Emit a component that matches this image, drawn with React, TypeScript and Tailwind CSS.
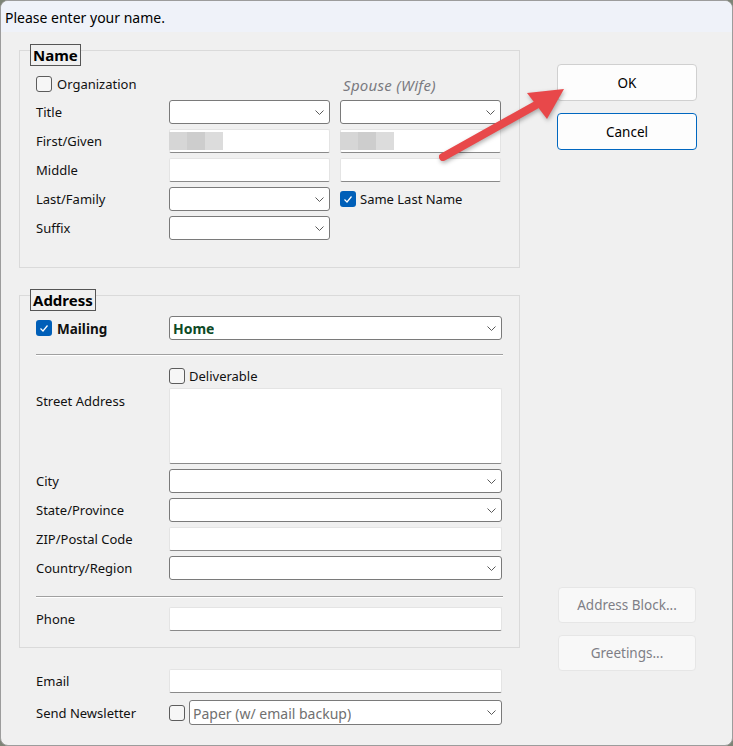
import React from 'react';

const Chevron = () => (
  <svg width="9" height="5" viewBox="0 0 9 5" className="shrink-0">
    <polyline points="0.5,0.5 4.5,4.5 8.5,0.5" fill="none" stroke="#5a5a5a" strokeWidth="1" />
  </svg>
);

const CheckBox = ({ checked }: { checked?: boolean }) =>
  checked ? (
    <span className="flex h-4 w-4 shrink-0 items-center justify-center rounded-[3px] bg-[#005fb8]">
      <svg width="12" height="12" viewBox="0 0 12 12">
        <polyline points="2.5,6.5 5,9 9.5,3.5" fill="none" stroke="#fff" strokeWidth="1.2" />
      </svg>
    </span>
  ) : (
    <span className="h-4 w-4 shrink-0 rounded-[3px] border border-[#5c5c5c] bg-[#f6f6f6]" />
  );

const Select = ({ children, className = '' }: { children?: React.ReactNode; className?: string }) => (
  <div className={`flex h-6 items-center justify-between rounded-[3px] border border-[#7a7a7a] bg-white pl-[3px] pr-[5px] ${className}`}>
    <span className="truncate pt-[1px]">{children}</span>
    <Chevron />
  </div>
);

const TextBox = ({ children, className = '' }: { children?: React.ReactNode; className?: string }) => (
  <div className={`flex h-6 items-center rounded-[2px] border border-[#e4e4e4] border-b-[#8a8a8a] bg-white ${className}`}>{children}</div>
);

// blurred name placeholder
const Blur = () => (
  <div className="ml-[-1px] flex h-[18px]">
    <span className="w-[18px] bg-[#d6d6d6]" />
    <span className="w-[18px] bg-[#cdcdcd]" />
    <span className="w-[18px] bg-[#dcdcdc]" />
  </div>
);

const Label = ({ children }: { children: React.ReactNode }) => (
  <div className="flex h-6 items-center pt-[2px]">{children}</div>
);

const Separator = () => <div className="h-[2px] border-t border-[#a0a0a0] bg-white" />;

const Legend = ({ children }: { children: React.ReactNode }) => (
  <div className="absolute left-[10px] top-[-7px] border border-[#555] bg-[#f0f0f0] px-[2px] pt-[1px] text-[15px] font-bold leading-[19px] text-black">
    {children}
  </div>
);

const Button = ({ children, primary, disabled }: { children: React.ReactNode; primary?: boolean; disabled?: boolean }) => (
  <div
    className={`flex items-center justify-center rounded-[4px] border pt-[1px] text-[13.5px] ${
      primary
        ? 'h-[37px] border-[#d0d0d0] bg-[#fdfdfd] text-black'
        : disabled
        ? 'h-[36px] border-[#e6e6e6] bg-[#f8f8f8] text-[#7e7e86]'
        : 'h-[37px] border-[#0067c0] bg-[#fdfdfd] text-black'
    }`}
  >
    {children}
  </div>
);

export default function App() {
  return (
    <div className="h-[746px] w-[733px] bg-[#7d8476]">
      <div className="relative flex h-[746px] w-[733px] flex-col overflow-hidden rounded-[8px] border border-[#9c9c9c] bg-[#f0f0f0] font-['Noto_Sans',sans-serif] text-[13px] text-[#111]">
        <div className="flex h-[31px] shrink-0 items-center bg-[#eff2f9] pl-[4px] pt-[2px] text-[14px] text-black">
          Please enter your name.
        </div>

        <div className="flex flex-1">
          {/* left column */}
          <div className="w-[520px] shrink-0 pl-[18px]">
            {/* Name group */}
            <div className="relative mt-[18px] h-[218px] w-[501px] border border-[#dadada] px-[16px] pt-[20px]">
              <Legend>Name</Legend>
              <div className="grid grid-cols-[123px_161px_161px] gap-x-[10px] gap-y-[5px]">
                <div className="col-span-2 flex h-6 items-center gap-[5px] pt-[2px]">
                  <CheckBox />
                  <span className="pt-[1px]">Organization</span>
                </div>
                <div className="flex h-6 items-end pl-[3px] text-[15px] italic leading-[20px] tracking-[0.3px] text-[#7a7a80]">Spouse (Wife)</div>

                <Label>Title</Label>
                <Select />
                <Select />

                <Label>First/Given</Label>
                <TextBox>
                  <Blur />
                </TextBox>
                <TextBox>
                  <Blur />
                </TextBox>

                <Label>Middle</Label>
                <TextBox />
                <TextBox />

                <Label>Last/Family</Label>
                <Select />
                <div className="flex h-6 items-center gap-[4px]">
                  <CheckBox checked />
                  <span className="pt-[2px]">Same Last Name</span>
                </div>

                <Label>Suffix</Label>
                <Select />
                <div />
              </div>
            </div>

            {/* Address group */}
            <div className="relative mt-[27px] h-[353px] w-[501px] border border-[#dadada] px-[16px] pt-[20px]">
              <Legend>Address</Legend>
              <div className="grid grid-cols-[133px_333px]">
                <div className="flex h-6 items-center gap-[5px]">
                  <CheckBox checked />
                  <span className="pt-[2px] text-[13.5px] font-bold">Mailing</span>
                </div>
                <Select className="text-[14px] font-bold text-[#0d4a26]">Home</Select>
              </div>
              <div className="mt-[14px]">
                <Separator />
              </div>
              <div className="mt-[11px] grid grid-cols-[133px_333px]">
                <div />
                <div className="flex h-[17px] items-center gap-[4px]">
                  <CheckBox />
                  <span className="pt-[2px]">Deliverable</span>
                </div>
              </div>
              <div className="mt-[4px] grid grid-cols-[133px_333px] gap-y-[5px]">
                <div className="pt-[4px]">Street Address</div>
                <div className="h-[76px] rounded-[2px] border border-[#e4e4e4] border-b-[#8a8a8a] bg-white" />
                <Label>City</Label>
                <Select />
                <Label>State/Province</Label>
                <Select />
                <Label>ZIP/Postal Code</Label>
                <TextBox />
                <Label>Country/Region</Label>
                <Select />
              </div>
              <div className="mt-[16px]">
                <Separator />
              </div>
              <div className="mt-[9px] grid grid-cols-[133px_333px]">
                <Label>Phone</Label>
                <TextBox />
              </div>
            </div>

            {/* Email / newsletter */}
            <div className="mt-[21px] grid grid-cols-[133px_333px] gap-y-[7px] pl-[17px]">
              <Label>Email</Label>
              <TextBox />
              <div className="flex h-[25px] items-center pt-[2px]">Send Newsletter</div>
              <div className="flex items-center gap-[4px]">
                <CheckBox />
                <Select className="h-[25px] flex-1 text-[14px] text-[#707070]">Paper (w/ email backup)</Select>
              </div>
            </div>
          </div>

          {/* right column */}
          <div className="ml-[36px] flex w-[140px] flex-col">
            <div className="mt-[32px]">
              <Button primary>OK</Button>
            </div>
            <div className="mt-[12px]">
              <Button>Cancel</Button>
            </div>
            <div className="mx-[1px] mt-[437px]">
              <Button disabled>Address Block...</Button>
            </div>
            <div className="mx-[1px] mt-[12px]">
              <Button disabled>Greetings...</Button>
            </div>
          </div>
        </div>

        {/* red annotation arrow */}
        <svg
          className="pointer-events-none absolute left-[-1px] top-[-1px] drop-shadow-[1px_2px_2px_rgba(0,0,0,0.3)]"
          width="733"
          height="746"
          viewBox="0 0 733 746"
        >
          <line x1="443" y1="157" x2="536" y2="105" stroke="#e8484a" strokeWidth="8" strokeLinecap="round" />
          <polygon points="564,89 527,93 547,119" fill="#e8484a" />
        </svg>
      </div>
    </div>
  );
}
